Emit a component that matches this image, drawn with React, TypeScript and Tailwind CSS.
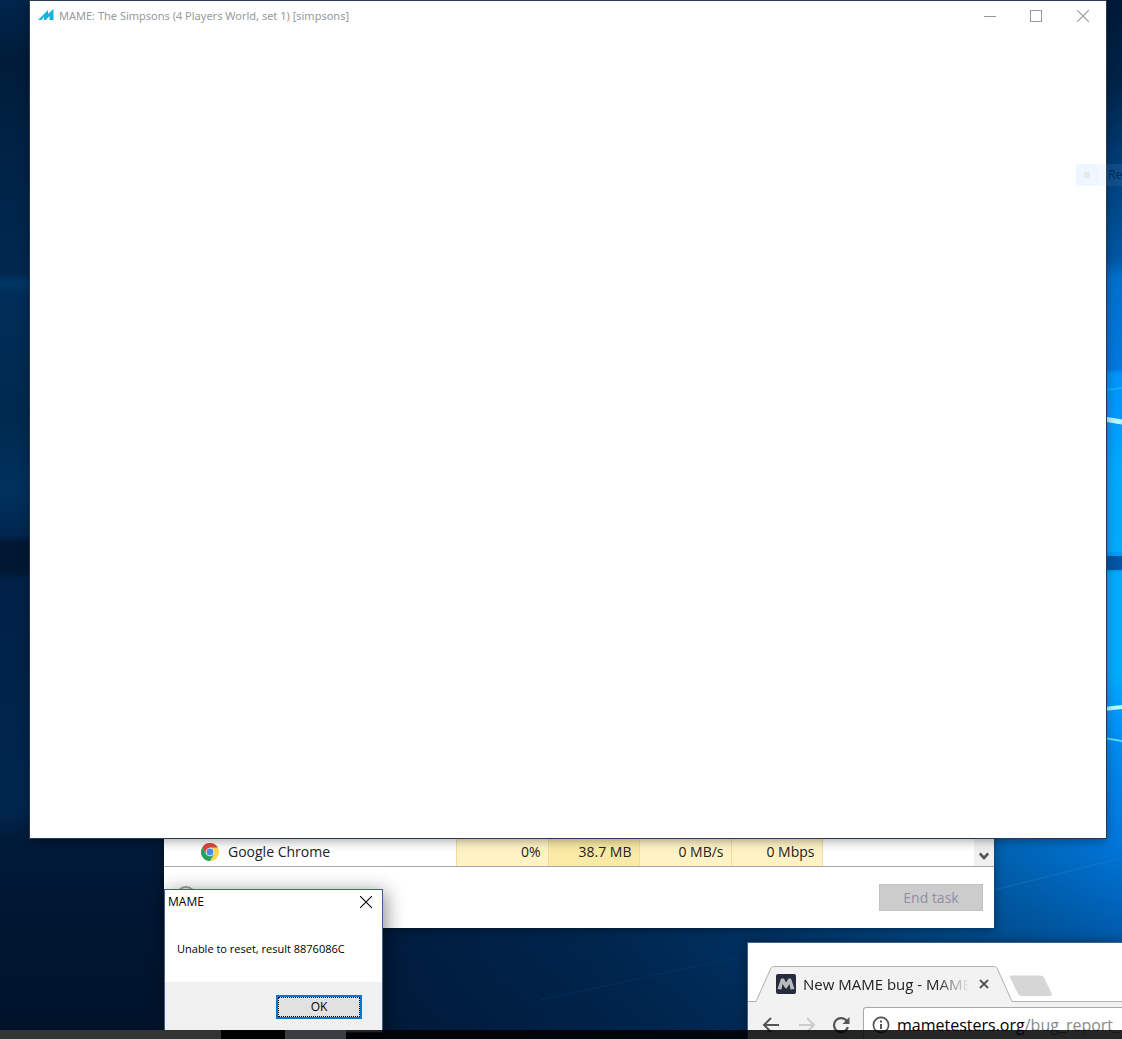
import React from "react";

const metrics = [
  { label: "CPU", value: "0%", tone: "w-[92px] bg-[#fff3c6]" },
  { label: "Memory", value: "38.7 MB", tone: "w-[91px] bg-[#f9eba6]" },
  { label: "Disk", value: "0 MB/s", tone: "w-[92px] bg-[#fff3c6]" },
  { label: "Network", value: "0 Mbps", tone: "w-[91px] bg-[#fff3c6]" },
];

function Wallpaper() {
  return (
    <svg
      className="absolute inset-0 h-full w-full"
      viewBox="0 0 1122 1039"
      preserveAspectRatio="none"
      aria-hidden="true"
    >
      <defs>
        <linearGradient id="left" x1="0" y1="0" x2="0" y2="1">
          <stop offset="0" stopColor="#00254b" />
          <stop offset="0.06" stopColor="#001c3a" />
          <stop offset="0.14" stopColor="#002245" />
          <stop offset="0.262" stopColor="#00284f" />
          <stop offset="0.272" stopColor="#003665" />
          <stop offset="0.285" stopColor="#002d58" />
          <stop offset="0.4" stopColor="#00294f" />
          <stop offset="0.47" stopColor="#00315d" />
          <stop offset="0.515" stopColor="#002750" />
          <stop offset="0.522" stopColor="#001833" />
          <stop offset="0.55" stopColor="#001833" />
          <stop offset="0.558" stopColor="#002147" />
          <stop offset="0.78" stopColor="#00264d" />
          <stop offset="0.81" stopColor="#001a38" />
          <stop offset="1" stopColor="#00122a" />
        </linearGradient>
        <linearGradient id="right" x1="0" y1="0" x2="0" y2="839" gradientUnits="userSpaceOnUse">
          <stop offset="0" stopColor="#001a38" />
          <stop offset="0.1" stopColor="#002449" />
          <stop offset="0.19" stopColor="#003d75" />
          <stop offset="0.25" stopColor="#004a8d" />
          <stop offset="0.31" stopColor="#0059a8" />
          <stop offset="0.33" stopColor="#0070cf" />
          <stop offset="0.44" stopColor="#0079e2" />
          <stop offset="0.445" stopColor="#0094fb" />
          <stop offset="0.5" stopColor="#009cff" />
          <stop offset="0.56" stopColor="#00abff" />
          <stop offset="0.8" stopColor="#00aeff" />
          <stop offset="0.86" stopColor="#0096fc" />
          <stop offset="0.9" stopColor="#0088ee" />
          <stop offset="1" stopColor="#0078de" />
        </linearGradient>
        <linearGradient id="floor" x1="164" y1="0" x2="1122" y2="0" gradientUnits="userSpaceOnUse">
          <stop offset="0" stopColor="#001734" />
          <stop offset="0.25" stopColor="#002146" />
          <stop offset="0.45" stopColor="#002d5a" />
          <stop offset="0.6" stopColor="#003c74" />
          <stop offset="0.75" stopColor="#005298" />
          <stop offset="0.88" stopColor="#0066b8" />
          <stop offset="1" stopColor="#0078de" />
        </linearGradient>
        <linearGradient id="dusk" x1="0" y1="839" x2="0" y2="1039" gradientUnits="userSpaceOnUse">
          <stop offset="0" stopColor="#001430" stopOpacity="0" />
          <stop offset="0.5" stopColor="#001430" stopOpacity="0.3" />
          <stop offset="1" stopColor="#001430" stopOpacity="0.5" />
        </linearGradient>
      </defs>
      <rect width="560" height="1039" fill="url(#left)" />
      <rect x="560" y="0" width="562" height="839" fill="url(#right)" />
      <rect x="164" y="839" width="958" height="200" fill="url(#floor)" />
      <rect x="164" y="839" width="958" height="200" fill="url(#dusk)" />
      <path d="M1106 390 L1122 388" stroke="#14acff" strokeWidth="2" />
      <path d="M1104 419 L1122 422" stroke="#bdf6ff" strokeWidth="5" />
      <rect x="1106" y="552" width="16" height="20" fill="#009cf8" />
      <rect x="1106" y="556" width="16" height="14" fill="#0057a8" />
      <path d="M1104 709 L1122 707" stroke="#b8fbff" strokeWidth="4" />
      <path d="M1104 738 L1122 741" stroke="#5fd8f8" strokeWidth="2" />
      <path d="M994 890 L1122 858" stroke="#2b86d2" strokeOpacity="0.4" strokeWidth="1" />
      <path d="M540 1000 L748 955" stroke="#0a417a" strokeOpacity="0.35" strokeWidth="1" />
    </svg>
  );
}

function MameLogo() {
  return (
    <svg className="h-4 w-4" viewBox="0 0 16 16" aria-hidden="true">
      <path d="M0 12 L10 2 V6 L15.500 1 V12 H11.500 V8 L8 12 H6 V8.500 L3.500 12 Z" fill="#12b4e0" />
    </svg>
  );
}

function CloseIcon() {
  return (
    <svg className="h-3 w-3" viewBox="0 0 12 12" aria-hidden="true">
      <path d="M0 0 L12 12 M12 0 L0 12" stroke="currentColor" strokeWidth="1.1" />
    </svg>
  );
}

function MameWindow() {
  return (
    <section
      aria-label="MAME"
      className="absolute top-0 right-[15px] left-[29px] h-[839px] border border-[#2a3a52] bg-white shadow-[0_2px_10px_rgba(0,0,0,0.35)]"
    >
      <header className="flex h-[30px] items-center pl-2 text-[#999999]">
        <MameLogo />
        <h1 className="ml-[5px] flex-1 font-['Noto_Sans',sans-serif] text-[11px] leading-4 whitespace-nowrap">
          MAME: The Simpsons (4 Players World, set 1) [simpsons]
        </h1>
        <button aria-label="Minimize" className="flex h-full w-11 items-center justify-center">
          <span className="h-px w-3 bg-current" />
        </button>
        <button aria-label="Maximize" className="flex h-full w-12 items-center justify-center">
          <span className="h-3 w-3 border border-current" />
        </button>
        <button aria-label="Close" className="flex h-full w-[46px] items-center justify-center">
          <CloseIcon />
        </button>
      </header>
    </section>
  );
}

function ChromeLogo() {
  return (
    <svg className="h-[18px] w-[18px]" viewBox="0 0 18 18" aria-hidden="true">
      <circle cx="9" cy="9" r="9" fill="#ffd34a" />
      <path d="M9 4.500 H16.800 A9 9 0 0 0 1.200 4.500 L5 11 Z" fill="#dc4a3d" />
      <path d="M1.200 4.500 A9 9 0 0 0 9 18 L12.900 11.200 L9 13 L5.100 11.200 Z" fill="#1fa463" />
      <circle cx="9" cy="9" r="4.300" fill="#f4f7f2" />
      <circle cx="9" cy="9" r="3.400" fill="#4c8bf5" />
    </svg>
  );
}

function TaskManager() {
  return (
    <section
      aria-label="Task Manager"
      className="absolute top-[700px] left-[164px] flex h-[228px] w-[830px] flex-col bg-white shadow-[0_1px_10px_rgba(0,0,0,0.4)]"
    >
      <div className="flex flex-1 items-end border-b border-[#a8a8a8]">
        <table className="w-[810px] table-fixed border-collapse text-[14px] leading-5 text-[#222222]">
          <tbody>
            <tr className="h-[29px]">
              <th scope="row" className="w-[292px] pl-[37px] text-left font-normal">
                <span className="flex items-center gap-[9px]">
                  <ChromeLogo />
                  Google Chrome
                </span>
              </th>
              {metrics.map((m) => (
                <td
                  key={m.label}
                  className={`border-x border-[#f0dca0] pr-[7px] text-right whitespace-nowrap ${m.tone}`}
                >
                  {m.value}
                </td>
              ))}
              <td />
            </tr>
          </tbody>
        </table>
        <button aria-label="Scroll down" className="flex h-[29px] w-5 items-center justify-center bg-[#f0f0f0] pt-2">
          <svg className="h-2 w-[10px]" viewBox="0 0 10 8" aria-hidden="true">
            <path d="M0.800 1.500 L5 6 L9.200 1.500" fill="none" stroke="#555555" strokeWidth="2.600" />
          </svg>
        </button>
      </div>
      <footer className="flex h-[61px] items-center justify-between pr-[11px] pl-3">
        <button aria-label="Fewer details" className="mb-1 h-5 w-5 rounded-full border-2 border-[#a0a0a0]" />
        <button className="h-[27px] w-[104px] border border-[#c2c2c2] bg-[#cccccc] text-[14px] leading-5 text-[#8d8fa6]">
          End task
        </button>
      </footer>
    </section>
  );
}

function MessageDialog() {
  return (
    <section
      role="dialog"
      aria-label="MAME message"
      className="absolute top-[889px] left-[164px] flex w-[219px] flex-col border border-[#41608f] bg-white text-[12px] leading-4 text-black shadow-[3px_3px_18px_rgba(0,0,0,0.45)]"
    >
      <header className="flex h-6 items-center justify-between pr-[10px] pl-[3px]">
        <h2>MAME</h2>
        <button aria-label="Close message">
          <CloseIcon />
        </button>
      </header>
      <p className="h-[68px] pt-[27px] pl-3 text-[11px] leading-4 whitespace-nowrap">
        Unable to reset, result 8876086C
      </p>
      <footer className="flex h-[50px] items-center justify-end bg-[#f0f0f0] pr-5">
        <button className="h-6 w-[86px] border-2 border-[#0078d7] bg-[#e1e1e1]">
          <span className="flex h-full items-center justify-center border border-dotted border-black">OK</span>
        </button>
      </footer>
    </section>
  );
}

function BrowserWindow() {
  return (
    <section
      aria-label="Browser"
      className="absolute top-[942px] right-0 left-[747px] border-t border-l border-[#41608f] bg-white pt-[23px] shadow-[0_0_10px_rgba(0,0,0,0.4)]"
    >
      <div className="relative flex h-9 border-b border-[#b0b0b0]">
        <div className="relative -mb-px ml-[6px] h-9 w-[260px]">
          <svg className="absolute inset-0 h-full w-full" viewBox="0 0 260 36" aria-hidden="true">
            <path d="M0 36 L2 35.500 L17 2 Q18 0.500 20 0.500 H240 Q242 0.500 243 2 L258 35.500 L260 36 Z" fill="#f2f2f2" />
            <path d="M0 35.500 H2 L17 2 Q18 0.500 20 0.500 H240 Q242 0.500 243 2 L258 35.500 H260" fill="none" stroke="#b0b0b0" />
          </svg>
          <div className="relative flex h-full items-center pr-[14px] pl-[22px]">
            <svg className="h-5 w-5 shrink-0" viewBox="0 0 20 20" aria-hidden="true">
              <rect width="20" height="20" rx="2" fill="#252a3d" />
              <path d="M1.500 15 L5 4.500 H8 L10 8.500 L12.500 4.500 H15 L18.500 15 L14.500 15.500 L13.500 10 L10.500 14.500 H9.500 L6.500 10 L5.500 15.500 Z" fill="#b9babd" />
            </svg>
            <span className="ml-[7px] w-[166px] overflow-hidden text-[15px] leading-5 whitespace-nowrap text-[#222222] [mask-image:linear-gradient(to_right,black_80%,transparent)]">
              New MAME bug - MAME
            </span>
            <button aria-label="Close tab" className="ml-[10px] text-[#555555]">
              <svg className="h-[10px] w-[10px]" viewBox="0 0 10 10" aria-hidden="true">
                <path d="M1 1 L9 9 M9 1 L1 9" stroke="currentColor" strokeWidth="1.800" />
              </svg>
            </button>
          </div>
        </div>
        <button aria-label="New tab" className="-ml-[5px] mt-[9px] h-[22px]">
          <svg className="h-[22px] w-[44px]" viewBox="0 0 44 22" aria-hidden="true">
            <path d="M3 0.500 H31 Q34 0.500 35 2.500 L43 19 Q43.500 21 41 21 H13 Q10 21 9 19 L1 2.500 Q0.500 0.500 3 0.500 Z" fill="#d6d6d6" />
          </svg>
        </button>
      </div>
      <div className="flex h-[42px] items-start bg-[#f2f2f2] pt-[5px]">
        <div className="flex h-[35px] items-center text-[#555555]">
          <button aria-label="Back" className="ml-[14px]">
            <svg className="h-[18px] w-[18px]" viewBox="0 0 18 18" aria-hidden="true">
              <path d="M17 9 H2 M9 2 L2 9 L9 16" fill="none" stroke="currentColor" strokeWidth="2" />
            </svg>
          </button>
          <button aria-label="Forward" className="ml-[18px] text-[#cccccc]">
            <svg className="h-[18px] w-[18px]" viewBox="0 0 18 18" aria-hidden="true">
              <path d="M1 9 H16 M9 2 L16 9 L9 16" fill="none" stroke="currentColor" strokeWidth="2" />
            </svg>
          </button>
          <button aria-label="Reload" className="ml-4">
            <svg className="h-[18px] w-[18px]" viewBox="0 0 18 18" aria-hidden="true">
              <path d="M15 5.500 A7 7 0 1 0 15.800 11" fill="none" stroke="currentColor" strokeWidth="2.200" />
              <path d="M17.500 1 V8 H10.500 Z" fill="currentColor" />
            </svg>
          </button>
        </div>
        <div className="ml-[13px] flex h-[35px] flex-1 items-center overflow-hidden rounded-tl-[3px] border-t border-l border-[#a9a9a9] bg-white pl-2">
          <svg className="h-[18px] w-[18px] shrink-0" viewBox="0 0 18 18" aria-hidden="true">
            <circle cx="9" cy="9" r="7.600" fill="none" stroke="#555555" strokeWidth="1.700" />
            <path d="M9 8 V13 M9 4.500 V6.500" stroke="#555555" strokeWidth="2" />
          </svg>
          <a href="#bug-report" className="ml-[7px] text-[16px] leading-6 whitespace-nowrap text-[#8a8a8a]">
            <span className="text-black">mametesters.org</span>/bug_report_
          </a>
        </div>
      </div>
    </section>
  );
}

function SnipHint() {
  return (
    <div className="absolute top-[164px] right-0 flex h-[22px] w-[46px] items-center overflow-hidden bg-[#8cc8ff]/10 text-[12px] leading-4">
      <span className="flex h-full w-[22px] shrink-0 items-center justify-center bg-[#c0e0ff]/10">
        <span className="h-[6px] w-[6px] rounded-full bg-[#e6e8e8]" />
      </span>
      <span className="ml-[10px] text-[#002a52]">Re</span>
    </div>
  );
}

function Taskbar() {
  return (
    <nav aria-label="Taskbar" className="absolute inset-x-0 bottom-0 flex h-[9px] bg-black/85">
      <span className="w-[221px] bg-[#333333]" />
      <span className="w-16 bg-black" />
      <span className="w-[61px] bg-[#3a3d41]" />
    </nav>
  );
}

export default function App() {
  return (
    <main className="relative h-screen overflow-hidden bg-[#001a38] font-['Open_Sans',sans-serif]">
      <Wallpaper />
      <BrowserWindow />
      <TaskManager />
      <MameWindow />
      <MessageDialog />
      <SnipHint />
      <Taskbar />
    </main>
  );
}
